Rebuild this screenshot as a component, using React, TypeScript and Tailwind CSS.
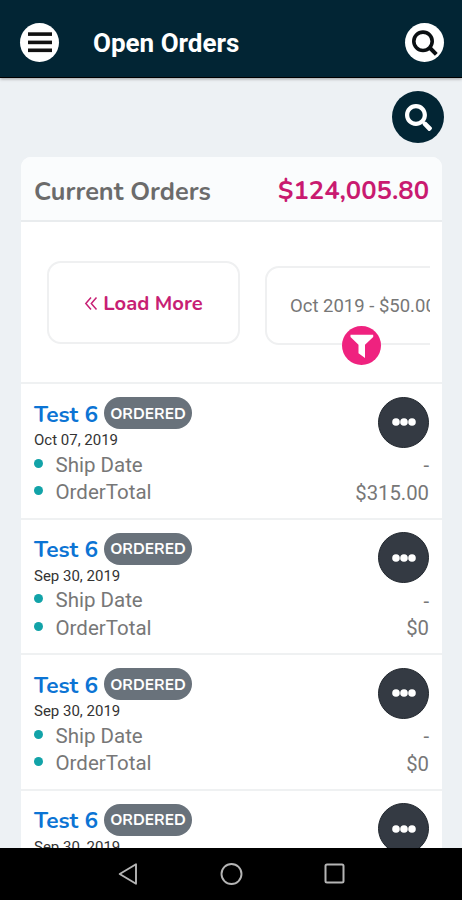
import { FaSearch } from 'react-icons/fa';

type Order = {
  name: string;
  status: string;
  date: string;
  shipDate: string;
  total: string;
};

const orders: Order[] = [
  { name: 'Test 6', status: 'ORDERED', date: 'Oct 07, 2019', shipDate: '-', total: '$315.00' },
  { name: 'Test 6', status: 'ORDERED', date: 'Sep 30, 2019', shipDate: '-', total: '$0' },
  { name: 'Test 6', status: 'ORDERED', date: 'Sep 30, 2019', shipDate: '-', total: '$0' },
  { name: 'Test 6', status: 'ORDERED', date: 'Sep 30, 2019', shipDate: '-', total: '$0' },
];

function Header() {
  return (
    <header className="z-10 flex h-[78px] shrink-0 items-center border-b border-black bg-[#022534] pt-[7px] pr-[18px] pl-5 shadow-[0_1px_3px_rgba(0,0,0,0.35)]">
      <button className="flex h-[39px] w-[39px] items-center justify-center rounded-full bg-white">
        <svg width="24" height="21" viewBox="0 0 24 21" fill="#111">
          <rect width="24" height="3.6" y="0.3" />
          <rect width="24" height="3.6" y="8.6" />
          <rect width="24" height="3.6" y="16.5" />
        </svg>
      </button>
      <h1 className="ml-[34px] flex-1 pt-[2px] font-['Roboto',sans-serif] text-[26px] leading-8 font-bold whitespace-nowrap text-white">
        Open Orders
      </h1>
      <button className="h-[39px] w-[39px] rounded-full bg-white">
        <svg width="39" height="39" viewBox="0 0 39 39" fill="none" stroke="#0a0f12" strokeWidth="3.6">
          <circle cx="18" cy="18.3" r="9.2" />
          <path d="M24.5 24.5l6.800 6.800" strokeWidth="4" />
        </svg>
      </button>
    </header>
  );
}

function MonthStrip() {
  return (
    <div className="relative flex h-[160px] items-start overflow-hidden pt-[39px] pl-[26px]">
      <div className="flex w-[383px] gap-[25px] overflow-hidden">
        <button className="flex h-[83px] w-[193px] shrink-0 items-center justify-center gap-[5px] rounded-[14px] border-2 border-[#eff0f1] pt-0.5 text-[#c71f74]">
          <svg width="14" height="15" viewBox="0 0 14 15" fill="none" stroke="currentColor" strokeWidth="1.5">
            <path d="M7 1.5L1.8 7.5L7 13.5M12.500 1.5L7.300 7.5L12.500 13.5" />
          </svg>
          <span className="text-[20.2px] leading-6 font-bold whitespace-nowrap">Load More</span>
        </button>
        <div className="mt-[5px] flex h-[79px] w-[193px] shrink-0 items-center rounded-[14px] border-2 border-[#eff0f1] pt-[3px] pl-[23px]">
          <span className="font-['Roboto',sans-serif] text-[18.5px] whitespace-nowrap text-[#777]">
            Oct 2019 - $50.00
          </span>
        </div>
      </div>
      <button className="absolute top-[104px] left-[321px] h-[39px] w-[39px] rounded-full bg-[#ef227f]">
        <svg width="39" height="39" viewBox="0 0 39 39" fill="#fff">
          <path d="M8.500 8.800H31.200V11L23 18.800V32L16.500 27.200V18.800L8.500 11z" />
        </svg>
      </button>
    </div>
  );
}

function Detail({ label, value }: { label: string; value: string }) {
  return (
    <div className="flex h-[27.5px] items-center font-['Roboto',sans-serif] text-[20.5px] text-[#777]">
      <span className="mr-[12.5px] mb-[4px] h-[9px] w-[9px] rounded-full bg-[#12a3a8]" />
      <span className="flex-1">{label}</span>
      <span className="text-[20.3px]">{value}</span>
    </div>
  );
}

function OrderRow({ order }: { order: Order }) {
  return (
    <div className="relative h-[135.5px] shrink-0 border-t-2 border-[#eff1f2] px-[13px] pt-[12px]">
      <div className="flex h-[34px] items-center">
        <a className="w-[70px] pt-[4px] text-[22.7px] font-bold whitespace-nowrap text-[#0c74d4]">{order.name}</a>
        <span className="flex h-8 w-[88px] items-center justify-center rounded-full bg-[#69727b] pt-px text-[15.5px] font-bold text-white">
          {order.status}
        </span>
      </div>
      <div className="h-[21.5px] font-['Roboto',sans-serif] text-[15px] leading-[20px] text-[#333]">{order.date}</div>
      <Detail label="Ship Date" value={order.shipDate} />
      <Detail label="OrderTotal" value={order.total} />
      <button className="absolute top-[12.5px] right-[13px] flex h-[51px] w-[51px] items-center justify-center rounded-full border border-[#20262d] bg-[#343a43]">
        <svg width="24" height="8" viewBox="0 0 24 8" fill="#fff">
          <circle cx="4" cy="4" r="3.8" />
          <circle cx="12" cy="4" r="3.8" />
          <circle cx="20" cy="4" r="3.8" />
        </svg>
      </button>
    </div>
  );
}

function SystemNav() {
  return (
    <nav className="z-10 flex h-[52px] shrink-0 items-center justify-center gap-[81px] bg-black">
      <svg width="22" height="24" viewBox="0 0 22 24" fill="none" stroke="#b5b5b5" strokeWidth="1.9">
        <path d="M20 2.200V21.800L3.700 12z" strokeLinejoin="round" />
      </svg>
      <svg width="24" height="24" viewBox="0 0 24 24" fill="none" stroke="#b5b5b5" strokeWidth="1.9">
        <circle cx="12.5" cy="12" r="10" />
      </svg>
      <svg width="22" height="22" viewBox="0 0 22 22" fill="none" stroke="#b5b5b5" strokeWidth="2">
        <rect x="1.500" y="1.500" width="18" height="18" rx="1.5" />
      </svg>
    </nav>
  );
}

export default function App() {
  return (
    <div className="flex h-[900px] w-[462px] flex-col overflow-hidden bg-[#edf1f4] font-['Nunito','Lato',sans-serif]">
      <Header />
      <main className="flex min-h-0 flex-1 flex-col overflow-hidden">
        <div className="flex shrink-0 justify-end pt-[13px] pr-[18px]">
          <button className="flex h-[52px] w-[52px] items-center justify-center rounded-full bg-[#022534] text-white">
            <FaSearch size={27} />
          </button>
        </div>
        <section className="mt-[14px] ml-[21px] w-[421px] shrink-0 overflow-hidden rounded-t-[10px] bg-white">
          <div className="flex h-[65px] items-center justify-between border-b-2 border-[#e9ecee] bg-[#fafcfd] px-[13px] pt-[6px]">
            <h2 className="text-[25.3px] font-bold text-[#6b6b6b]">Current Orders</h2>
            <span className="text-[25.6px] font-bold text-[#c91a70]">$124,005.80</span>
          </div>
          <MonthStrip />
          {orders.map((order, i) => (
            <OrderRow key={i} order={order} />
          ))}
        </section>
      </main>
      <SystemNav />
    </div>
  );
}
